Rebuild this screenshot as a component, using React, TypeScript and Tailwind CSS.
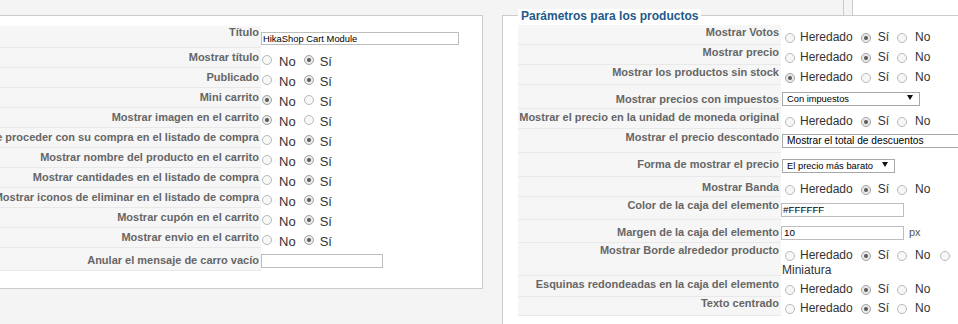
import React from "react";

// shared label style for the grey key cells
const KEY = "whitespace-nowrap bg-[#f6f6f6] border-b border-[#e9e9e9] text-[11px] leading-[13px] font-bold text-[#666]";

function Radio({ on, className = "" }: { on?: boolean; className?: string }) {
  return (
    <span
      className={`flex h-[10px] w-[10px] shrink-0 items-center justify-center rounded-full border ${
        on ? "border-[#a3a3a3] bg-[#e9e9e9]" : "border-[#b8b8b8] bg-[#f8f8f8]"
      } ${className}`}
    >
      {on && <span className="h-[4px] w-[4px] rounded-full bg-[#5a5a5a]" />}
    </span>
  );
}

function Arrow() {
  return (
    <svg width="6" height="5" viewBox="0 0 6 5" className="shrink-0">
      <path d="M0 0H6L3 5Z" fill="#111" />
    </svg>
  );
}

function LeftRow({ label, h, pt, children }: { label: string; h: string; pt: string; children: React.ReactNode }) {
  return (
    <div className={`flex ${h}`}>
      <div className={`flex w-[360px] shrink-0 justify-end pr-[2px] ${pt} ${KEY}`}>
        <span>{label}</span>
      </div>
      <div className="min-w-0 flex-1">{children}</div>
    </div>
  );
}

function RightRow({ label, h, pt, children }: { label: string; h: string; pt: string; children: React.ReactNode }) {
  return (
    <div className={`flex ${h}`}>
      <div className={`flex w-[263px] shrink-0 justify-end pr-[2px] ${pt} ${KEY}`}>
        <span>{label}</span>
      </div>
      <div className="min-w-0 flex-1">{children}</div>
    </div>
  );
}

function NoSi({ value }: { value: "no" | "si" }) {
  return (
    <div className="flex items-start pt-[6px] text-[13px] leading-[15px] text-[#333]">
      <Radio on={value === "no"} className="ml-[1px] mt-[1px]" />
      <span className="ml-[7px]">No</span>
      <Radio on={value === "si"} className="ml-[8px] mt-[1px]" />
      <span className="ml-[6px]">Sí</span>
    </div>
  );
}

function Inherit({ checked, pt = "pt-[5px]" }: { checked: number; pt?: string }) {
  return (
    <div className={`flex items-start text-[12px] leading-[14px] text-[#333] ${pt}`}>
      <Radio on={checked === 0} className="ml-[4px] mt-[3px]" />
      <span className="ml-[5px]">Heredado</span>
      <Radio on={checked === 1} className="ml-[8px] mt-[3px]" />
      <span className="ml-[7px]">Sí</span>
      <Radio on={checked === 2} className="ml-[8px] mt-[3px]" />
      <span className="ml-[8px]">No</span>
    </div>
  );
}

const leftRadios: [string, "no" | "si"][] = [
  ["Mostrar título", "si"],
  ["Publicado", "si"],
  ["Mini carrito", "no"],
  ["Mostrar imagen en el carrito", "no"],
  ["Mostrar el botón de proceder con su compra en el listado de compra", "si"],
  ["Mostrar nombre del producto en el carrito", "si"],
  ["Mostrar cantidades en el listado de compra", "si"],
  ["Mostrar iconos de eliminar en el listado de compra", "si"],
  ["Mostrar cupón en el carrito", "si"],
  ["Mostrar envio en el carrito", "si"],
];

export default function App() {
  return (
    <div className="flex h-[324px] w-[958px] items-start overflow-hidden bg-[#f4f4f4] font-['Liberation_Sans',Arial,sans-serif]">
      {/* left module details panel, its left side runs off screen */}
      <div className="-ml-[100px] mt-[15px] h-[274px] w-[583px] shrink-0 border border-[#ccc] bg-white pt-[10px]">
        <LeftRow label="Título" h="h-[22px]" pt="pt-0">
          <div className="flex h-[13px] w-[198px] items-center border border-[#bdbdbd] mt-[6px] pl-[1px] text-[9.4px] leading-[11px] text-black">
            HikaShop Cart Module
          </div>
        </LeftRow>
        {leftRadios.map(([label, v]) => (
          <LeftRow key={label} label={label} h="h-[20px]" pt="pt-[3px]">
            <NoSi value={v} />
          </LeftRow>
        ))}
        <LeftRow label="Anular el mensaje de carro vacío" h="h-[23px]" pt="pt-[6px]">
          <div className="mt-[6px] h-[14px] w-[122px] border border-[#bdbdbd]" />
        </LeftRow>
      </div>

      {/* right column: product parameters */}
      <div className="ml-[19px] flex h-[324px] w-[560px] shrink-0 flex-col">
        <div className="flex h-[15px] shrink-0">
          <div className="w-[341px]" />
          <div className="w-[9px] border-l border-[#ccc]" />
          <div className="flex-1 border-l border-[#ccc] bg-white" />
        </div>
        <div className="flex-1 border-l border-t border-[#ccc] bg-white pl-[15px]">
          <div className="-mt-[7px] flex h-[14px]">
            <span className="bg-white px-[3px] text-[12px] leading-[14px] font-bold text-[#1e5a8a]">
              Parámetros para los productos
            </span>
          </div>
          <div className="mt-[2px]">
            <RightRow label="Mostrar Votos" h="h-[20px]" pt="pt-[1px]">
              <Inherit checked={1} />
            </RightRow>
            <RightRow label="Mostrar precio" h="h-[20px]" pt="pt-[1px]">
              <Inherit checked={1} />
            </RightRow>
            <RightRow label="Mostrar los productos sin stock" h="h-[20px]" pt="pt-[1px]">
              <Inherit checked={0} />
            </RightRow>
            <RightRow label="Mostrar precios con impuestos" h="h-[24px]" pt="pt-[8px]">
              <div className="ml-[1px] mt-[7px] flex h-[14px] w-[138px] items-start justify-between border border-[#a9a9a9] pl-[4px] pr-[6px] text-[9.3px] leading-[12px] text-black">
                <span>Con impuestos</span>
                <span className="mt-[2px]">
                  <Arrow />
                </span>
              </div>
            </RightRow>
            <RightRow label="Mostrar el precio en la unidad de moneda original" h="h-[20px]" pt="pt-[2px]">
              <Inherit checked={1} pt="pt-[5px]" />
            </RightRow>
            <RightRow label="Mostrar el precio descontado" h="h-[24px]" pt="pt-[2px]">
              <div className="ml-[1px] mt-[5px] flex h-[14px] w-[230px] items-center border border-[#a9a9a9] pl-[4px] text-[10.2px] leading-[12px] text-black">
                Mostrar el total de descuentos
              </div>
            </RightRow>
            <RightRow label="Forma de mostrar el precio" h="h-[24px]" pt="pt-[5px]">
              <div className="ml-[1px] mt-[6px] flex h-[14px] w-[113px] items-start justify-between border border-[#a9a9a9] pl-[4px] pr-[6px] text-[9.4px] leading-[12px] text-black">
                <span>El precio más barato</span>
                <span className="mt-[2px]">
                  <Arrow />
                </span>
              </div>
            </RightRow>
            <RightRow label="Mostrar Banda" h="h-[20px]" pt="pt-[4px]">
              <Inherit checked={1} />
            </RightRow>
            <RightRow label="Color de la caja del elemento" h="h-[23px]" pt="pt-[2px]">
              <div className="mt-[6px] flex h-[14px] w-[123px] items-center border border-[#bdbdbd] pl-[1px] text-[9.8px] leading-[12px] text-black">
                #FFFFFF
              </div>
            </RightRow>
            <RightRow label="Margen de la caja del elemento" h="h-[23px]" pt="pt-[6px]">
              <div className="flex items-start">
                <div className="mt-[6px] flex h-[14px] w-[123px] items-center border border-[#bdbdbd] pl-[2px] text-[9.8px] leading-[12px] text-black">
                  10
                </div>
                <span className="ml-[5px] mt-[6px] text-[11px] leading-[13px] text-[#555]">px</span>
              </div>
            </RightRow>
            <RightRow label="Mostrar Borde alrededor producto" h="h-[33px]" pt="pt-[1px]">
              <div className="pt-[5px] text-[12px] leading-[14px] text-[#333]">
                <div className="flex items-start">
                  <Radio className="ml-[4px] mt-[3px]" />
                  <span className="ml-[5px]">Heredado</span>
                  <Radio on className="ml-[8px] mt-[3px]" />
                  <span className="ml-[7px]">Sí</span>
                  <Radio className="ml-[8px] mt-[3px]" />
                  <span className="ml-[8px]">No</span>
                  <Radio className="ml-[10px] mt-[3px]" />
                </div>
                <div className="ml-[1px] mt-[1px]">Miniatura</div>
              </div>
            </RightRow>
            <RightRow label="Esquinas redondeadas en la caja del elemento" h="h-[21px]" pt="pt-[2px]">
              <Inherit checked={1} pt="pt-[6px]" />
            </RightRow>
            <RightRow label="Texto centrado" h="h-[19px]" pt="pt-0">
              <Inherit checked={1} pt="pt-[4px]" />
            </RightRow>
          </div>
        </div>
      </div>
    </div>
  );
}
